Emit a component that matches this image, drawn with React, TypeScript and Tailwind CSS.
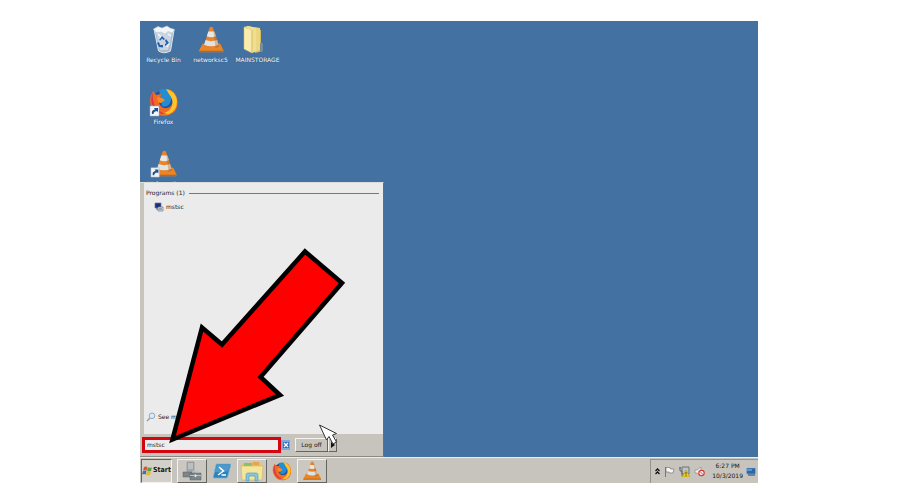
import type { ReactNode } from "react";

type IconProps = { className?: string };

function BinIcon({ className }: IconProps) {
  return (
    <svg viewBox="0 0 30 30" className={className} aria-hidden="true">
      <path d="M5 4 25 5 21.500 26 Q15 29.500 9.500 26Z" fill="#a9bdd0" stroke="#dbe5ed" />
      <path d="M7 7 12 5 23 6 21 18 19 25 11 25Z" fill="#c9d6e1" />
      <path d="M4.500 4 9 1.500 13 3 18 1 21 3 25.500 4.500 23.500 8 19 6.500 16 9 12 7 7 8Z" fill="#f3f6f8" stroke="#b8c6d2" strokeWidth=".6" />
      <path d="M9 9 12 12 11 14M19 9 22 11M18 22 20 18" stroke="#f3f7fa" strokeWidth="1.500" fill="none" />
      <path d="m10 15 3-4 3 3-1.500 1-1.500-1.500-1.500 2zM17 14l3 4-4 3v-2l1.500-1-1.500-2zM10 17l1 3 3 0v2.500l-4-.5-2-4z" fill="#245fae" />
    </svg>
  );
}

function ShortcutBadge() {
  return (
    <g>
      <path d="M1 19h9v10H1z" fill="#f2f4f7" stroke="#a7b3c0" strokeWidth=".5" />
      <path d="M3 27q-1-4 3-4.500l-1-1.500h4v4l-1.300-1Q4.500 24.500 4.500 27z" fill="#1f4f8c" />
    </g>
  );
}

function ConeIcon({ className, shortcut }: IconProps & { shortcut?: boolean }) {
  return (
    <svg viewBox="0 0 30 30" className={className} aria-hidden="true">
      <path d="M6 19h19l3.500 7.500q.3 1.500-1 1.500H3q-1.500 0-1-1.500z" fill="#ea8624" />
      <path d="M2 26.500h26.500v1.300H2z" fill="#b9651f" />
      <path d="M13.500 1.500q1.800-1.200 3.600 0L24 22q-9 4.500-17 0z" fill="#e8842c" />
      <path d="M12.200 6h6.300l1.700 5q-5 2-9.700 0z" fill="#e6e8e6" />
      <path d="M9.200 15q6 2.500 12.300 0l1.600 5q-8 3.500-15.500 0z" fill="#dfe3e3" />
      <path d="m17 1.500 7 20.500-4 1.500z" fill="#994c18" opacity=".3" />
      {shortcut && <ShortcutBadge />}
    </svg>
  );
}

function FolderIcon({ className }: IconProps) {
  return (
    <svg viewBox="2 0 28 30" className={className} aria-hidden="true">
      <path d="m16 4 6 1v13l2 1v7l-8 2z" fill="#d5bb62" />
      <path d="m21 18 3 1v7l-3 1z" fill="#778b98" />
      <path d="m8 1 13 2v22l-8 3z" fill="#ead681" />
      <path d="m5 2 8 3v23l-8-4z" fill="#f8edae" stroke="#d9c36f" strokeWidth=".5" />
      <path d="m5 2 4-1 8 2v22l-4 3V5z" fill="#f1df91" />
      <path d="M13 5v23" stroke="#c9ad53" strokeWidth=".6" />
    </svg>
  );
}

function FirefoxIcon({ className, shortcut }: IconProps & { shortcut?: boolean }) {
  return (
    <svg viewBox="0 0 30 30" className={className} aria-hidden="true">
      <circle cx="15" cy="15" r="12" fill="#1a55a5" />
      <path d="M10 3q9-3 14 4l-3 9q-3 5-8 3z" fill="#238dd2" />
      <path d="M4 4 7 8l5-1-1 5 4 1-3 3-2 0q2 6 8 5 8-2 5-13l-5-6q8 1 10 9 3 13-8 17-10 3-16-5-6-9 0-19z" fill="#f06a24" />
      <path d="M17 2q10 2 11 12 0 10-8 13-5 2-10-1 10 1 13-7 2-6-3-12z" fill="#fdc52b" />
      <path d="M4 5Q0 14 5 21q5 8 14 6-9-1-13-8-3-6-2-14z" fill="#d93545" />
      <path d="m8 10 5 1 3 2-4 3-3-1z" fill="#f78b2a" />
      {shortcut && <ShortcutBadge />}
    </svg>
  );
}

function ServerIcon() {
  return (
    <svg viewBox="0 0 20 20" className="size-5" aria-hidden="true">
      <path d="M5 1h7v14H5z" fill="#a2a8aa" stroke="#7e8486" strokeWidth=".5" />
      <path d="M6 3h5M6 5h5M6 7h5" stroke="#dfe3e3" strokeWidth=".8" />
      <path d="M1 11h9v5H1zM8 12h11v7H8z" fill="#7c858a" stroke="#596267" strokeWidth=".5" />
      <path d="M11 12v-2h5v2M8 14.500h11" stroke="#b9c0c2" fill="none" />
      <path d="M13.500 13.500v2.500" stroke="#eee" strokeWidth="1.500" />
    </svg>
  );
}

function PowerShellIcon() {
  return (
    <svg viewBox="0 0 20 20" className="size-5" aria-hidden="true">
      <path d="M5 3h13q1 0 .7 1.200L15.500 16q-.2 1-1.500 1H2q-1 0-.7-1L4 4q.2-1 1-1z" fill="#2b83bd" stroke="#76b3d4" strokeWidth=".8" />
      <path d="M5 4h13l-2 6q-5 2-13 1z" fill="#64a8d1" opacity=".6" />
      <path d="m7 6 4.500 4L6 14M9.500 14h4.500" stroke="#fff" strokeWidth="1.500" fill="none" />
    </svg>
  );
}

function ExplorerIcon() {
  return (
    <svg viewBox="0 0 24 22" className="h-[22px] w-6" aria-hidden="true">
      <path d="M2 4h8l1-2h8l2 2v16H2z" fill="#e0c767" />
      <path d="M4 3h8v3H4z" fill="#8cbb72" />
      <path d="M13 2h6v3h-6z" fill="#e9a34d" />
      <path d="M1 6h22l-1 14H2z" fill="#f5e59b" stroke="#ccb358" strokeWidth=".6" />
      <path d="M6 21v-6q0-2 2-2h8q2 0 2 2v6h-3v-5H9v5z" fill="#83c7e2" stroke="#4599bd" strokeWidth=".6" />
    </svg>
  );
}

function WindowsFlag() {
  return (
    <svg viewBox="0 0 11 10" className="h-[10px] w-[11px] shrink-0" aria-hidden="true">
      <path d="M2 1q2-1 3.500 0L4.600 4.500q-2-1-3.500 0z" fill="#d8562b" />
      <path d="M6 1.300q2 1 4 0L9 5Q7 6 5 4.800z" fill="#609e3d" />
      <path d="M1 5q2-1 3.500 0L3.700 8.500Q2 7.500 0 8.500z" fill="#416fb5" />
      <path d="M5 5.400q2 1 4 0L8 9Q6 10 4 8.800z" fill="#e5b72e" />
    </svg>
  );
}

function DesktopIcon({ label, children }: { label: string; children: ReactNode }) {
  return (
    <button type="button" className="flex h-[62px] w-[47px] flex-col items-center whitespace-nowrap text-white">
      <span className="flex h-[30px] items-center">{children}</span>
      <span className="text-[6px] leading-[10px] [text-shadow:0_0_1px_#193d62]">{label}</span>
    </button>
  );
}

const raised = "border border-t-[#f4f3ef] border-l-[#f4f3ef] border-r-[#66645f] border-b-[#66645f] ";

function TaskButton({ label, open, children }: { label: string; open?: boolean; children: ReactNode }) {
  return (
    <button
      type="button"
      aria-label={label}
      className={"flex h-6 w-[30px] items-center justify-center " + (open ? raised + "bg-[#cbc8c1]" : "")}
    >
      {children}
    </button>
  );
}

function StartMenu() {
  return (
    <section
      aria-label="Start menu"
      className="absolute bottom-0 left-0 flex h-[275px] w-[244px] flex-col border-t border-r border-b border-t-[#dcdcda] border-r-[#6a6e72] border-b-[#8b8984] bg-[#c7c4bd] text-[#1c1c1c]"
    >
      <div className="ml-1 flex flex-1 flex-col bg-[#ebebeb] pt-[5px] pr-1 pl-[2px]">
        <div className="flex items-center gap-1">
          <h2 className="text-[6px] leading-[10px]">Programs (1)</h2>
          <span className="h-px flex-1 bg-[#777]" />
        </div>
        <button type="button" className="mt-1 ml-2 flex items-center gap-[2px] self-start text-[6px] leading-[10px]">
          <svg viewBox="0 0 10 10" className="size-[10px]" aria-hidden="true">
            <path d="M1 1h6v5H1z" fill="#1a2e80" stroke="#707994" strokeWidth=".7" />
            <path d="M4 5h5v4H4z" fill="#d9dfe5" stroke="#6b7785" strokeWidth=".7" />
            <path d="M2 7h2M5 7h3" stroke="#53687e" />
          </svg>
          mstsc
        </button>
        <button type="button" className="mt-auto mb-3 flex items-center gap-[2px] self-start text-[6px] leading-[10px]">
          <svg viewBox="0 0 10 10" className="size-[10px]" aria-hidden="true">
            <path d="m1 9 3-3" stroke="#9a9aa3" strokeWidth="1.500" />
            <circle cx="6" cy="3.800" r="2.800" fill="#dceaf7" stroke="#8eaac9" />
          </svg>
          See more results
        </button>
      </div>
      <div className="flex h-[22px] items-center pb-px pl-[2px]">
        <div className="flex h-4 w-[139px] border-[3px] border-[#d4050f] bg-[#ededed]">
          <input aria-label="Search programs and files" defaultValue="mstsc" className="w-full min-w-0 bg-transparent pl-[2px] text-[6px] leading-[10px] outline-none" />
        </div>
        <button type="button" aria-label="Clear search" className="flex h-[10px] w-[9px] items-center justify-center bg-[#7fa8dd]">
          <svg viewBox="0 0 8 8" className="size-2" aria-hidden="true">
            <path d="M1 1h6v6H1z" fill="#2f6bb9" />
            <path d="m2 2 4 4m0-4L2 6" stroke="#fff" strokeWidth="1.300" />
          </svg>
        </button>
        <button type="button" className={"ml-[5px] h-[14px] w-[33px] text-[6px] leading-[12px] " + raised}>Log off</button>
        <button type="button" aria-label="More options" className={"flex h-[14px] w-[9px] items-center justify-center " + raised}>
          <svg viewBox="0 0 4 6" className="h-[6px] w-1" aria-hidden="true"><path d="m0 0 4 3-4 3z" fill="#111" /></svg>
        </button>
      </div>
      <svg viewBox="0 0 244 275" className="pointer-events-none absolute -top-px left-0 h-[275px] w-[244px]" aria-hidden="true">
        <path
          d="M165 69.500 202 101 120.500 195 140 213 32.500 257.500 62 145.500 82 162.500Z"
          fill="#fe0000"
          stroke="#000"
          strokeWidth="4.500"
          strokeMiterlimit="6"
        />
        <path d="m179.500 243 7 15 2.500-3.500 4 7.500 3.500-2-4-7 4-1.500z" fill="#fff" stroke="#333" strokeWidth="1" />
      </svg>
    </section>
  );
}

function Taskbar() {
  return (
    <footer className="flex h-[26px] items-center border-t border-[#eeece8] bg-[#c7c4bd] text-[#151515]">
      <button type="button" className="ml-px flex h-6 w-[31px] items-center border border-t-[#65635e] border-r-[#f4f3ef] border-b-[#f4f3ef] border-l-[#65635e] bg-[#d3d0c9] font-['DejaVu_Sans_Condensed','DejaVu_Sans',sans-serif] text-[7px] font-bold">
        <WindowsFlag />
        Start
      </button>
      <nav aria-label="Open programs" className="ml-[5px] flex">
        <TaskButton label="Server Manager" open><ServerIcon /></TaskButton>
        <TaskButton label="Windows PowerShell"><PowerShellIcon /></TaskButton>
        <TaskButton label="Windows Explorer" open><ExplorerIcon /></TaskButton>
        <TaskButton label="Firefox"><FirefoxIcon className="size-5" /></TaskButton>
        <TaskButton label="VLC media player" open><ConeIcon className="size-5" /></TaskButton>
      </nav>
      <div className="ml-auto flex h-6 items-center border-t border-l border-[#96938c] pl-1">
        <button type="button" aria-label="Show hidden icons" className="mr-1">
          <svg viewBox="0 0 5 7" className="h-[7px] w-[5px]" aria-hidden="true"><path d="m.5 3 2-2 2 2m-4 3 2-2 2 2" fill="none" stroke="#111" strokeWidth="1.300" /></svg>
        </button>
        <button type="button" aria-label="Action Center" className="mr-1">
          <svg viewBox="0 0 11 11" className="size-[11px]" aria-hidden="true">
            <path d="M1.500 1v10" stroke="#777" />
            <path d="M2 1.500h4l.5 1.500H10L9 7H5.500L5 6H2z" fill="#f6f6f3" stroke="#777" strokeWidth=".7" />
          </svg>
        </button>
        <button type="button" aria-label="Network" className="mr-1">
          <svg viewBox="0 0 11 11" className="size-[11px]" aria-hidden="true">
            <path d="M3 1h7v7H3z" fill="#bfc5c5" stroke="#6d7373" />
            <path d="M1 1v4h2v5M0 2h2" stroke="#666" fill="none" />
            <path d="m7 4 4 7H3z" fill="#edcf22" stroke="#8b7810" strokeWidth=".4" />
            <path d="M7 6v2.500m0 .7v1" stroke="#222" strokeWidth=".8" />
          </svg>
        </button>
        <button type="button" aria-label="Volume muted" className="mr-[7px]">
          <svg viewBox="0 0 11 11" className="size-[11px]" aria-hidden="true">
            <path d="M1 4h2l4-3v9L3 7H1z" fill="#f0f0ed" stroke="#8a8a88" strokeWidth=".7" />
            <circle cx="7.500" cy="7" r="2.700" fill="#fff" stroke="#d63a3a" strokeWidth="1.200" />
            <path d="m6 5.500 3 3" stroke="#d63a3a" />
          </svg>
        </button>
        <time className="text-center text-[6px] leading-[10px]">6:27 PM<br />10/3/2019</time>
        <button type="button" aria-label="Show desktop" className="mr-[2px] ml-[3px]">
          <svg viewBox="0 0 10 9" className="h-[9px] w-[10px]" aria-hidden="true">
            <path d="M.5 1h9v6h-9z" fill="#2867aa" stroke="#9ebbd8" strokeWidth=".5" />
            <path d="M1 2h5v2H1z" fill="#5d96cf" />
            <path d="M2 8h7" stroke="#173f73" />
          </svg>
        </button>
      </div>
    </footer>
  );
}

export default function App() {
  return (
    <div className="flex min-h-screen bg-white px-[140px] py-[21px] font-['DejaVu_Sans',sans-serif]">
      <div className="flex min-w-0 flex-1 flex-col bg-[#4271a2]">
        <main className="relative flex-1 pt-1">
          <div className="grid grid-flow-col grid-rows-[repeat(3,62px)] justify-start">
            <DesktopIcon label="Recycle Bin"><BinIcon className="size-[30px]" /></DesktopIcon>
            <DesktopIcon label="Firefox"><FirefoxIcon className="size-[30px]" shortcut /></DesktopIcon>
            <DesktopIcon label="VLC media"><ConeIcon className="size-7" shortcut /></DesktopIcon>
            <div className="row-span-3">
              <DesktopIcon label="networksc5"><ConeIcon className="size-7" /></DesktopIcon>
            </div>
            <div className="row-span-3">
              <DesktopIcon label="MAINSTORAGE"><FolderIcon className="h-[30px] w-[34px] pr-[6px]" /></DesktopIcon>
            </div>
          </div>
          <StartMenu />
        </main>
        <Taskbar />
      </div>
    </div>
  );
}
